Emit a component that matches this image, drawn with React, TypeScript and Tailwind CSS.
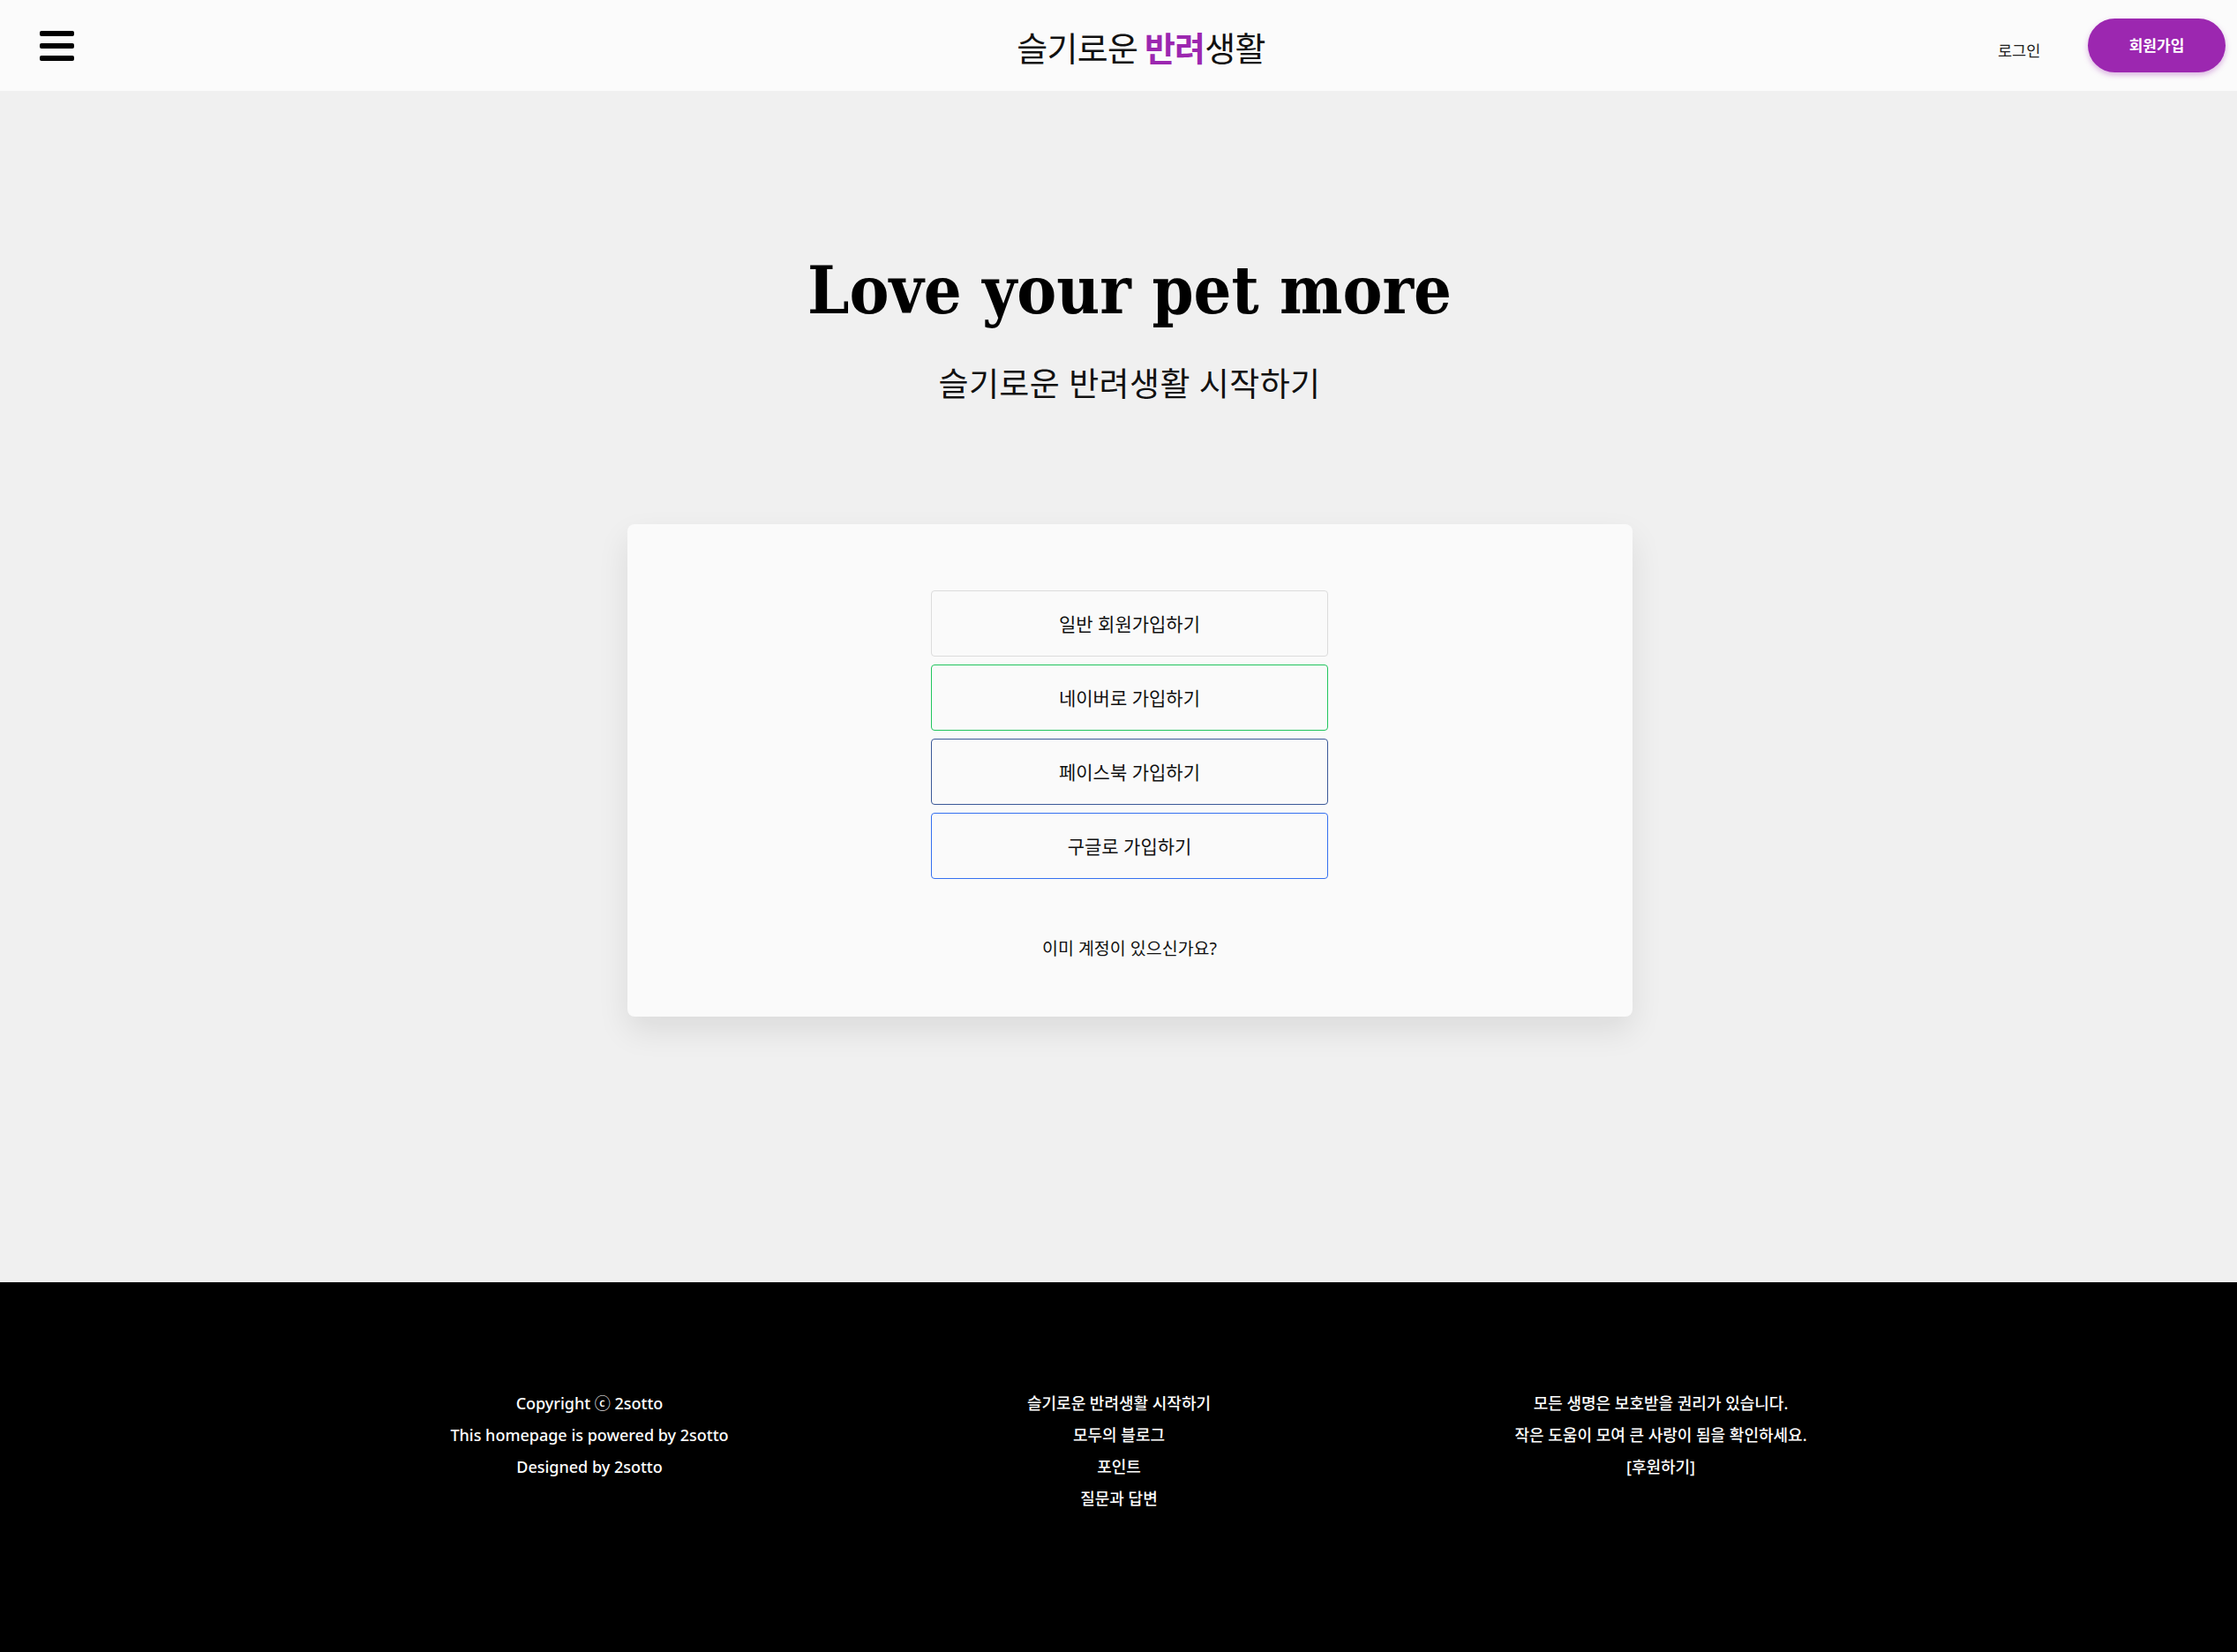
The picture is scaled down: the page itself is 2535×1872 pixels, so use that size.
const sans = "font-['Noto_Sans','Noto_Sans_CJK_KR',sans-serif]";

function Hamburger() {
  return (
    <div className="flex w-[39px] flex-col gap-[8px]">
      <span className="h-[6px] w-full rounded-[2px] bg-black" />
      <span className="h-[6px] w-full rounded-[2px] bg-black" />
      <span className="h-[6px] w-full rounded-[2px] bg-black" />
    </div>
  );
}

function Header() {
  return (
    <header className="flex h-[103px] items-center bg-[#fbfbfb] pl-[45px] pr-[13px]">
      <div className="w-[258px]">
        <Hamburger />
      </div>
      <div className="flex flex-1 justify-center pl-[19px]">
        <span className="mt-[2px] text-[38px] leading-none tracking-[-0.02em] text-[#111] font-['Noto_Sans_CJK_KR',sans-serif]">
          슬기로운 <span className="font-bold text-[#9c27b0]">반려</span>생활
        </span>
      </div>
      <div className="flex w-[258px] items-center justify-between">
        <span className="mt-[12px] text-[17.5px] text-[#222]">로그인</span>
        <button className="h-[61px] w-[156px] rounded-full bg-[#9c27b0] text-[17px] font-bold text-white shadow-[0_3px_6px_rgba(156,39,176,0.35)]">
          회원가입
        </button>
      </div>
    </header>
  );
}

const signups = [
  { label: '일반 회원가입하기', border: 'border-[#dcdcdc]' },
  { label: '네이버로 가입하기', border: 'border-[#22c55e]' },
  { label: '페이스북 가입하기', border: 'border-[#3b5998]' },
  { label: '구글로 가입하기', border: 'border-[#3570f0]' },
];

function SignupCard() {
  return (
    <div className="flex w-[1139px] flex-col items-center rounded-lg bg-[#fafafa] pt-[75px] pb-[64px] shadow-[0_16px_36px_rgba(0,0,0,0.09)]">
      <div className="flex w-[450px] flex-col gap-[9px]">
        {signups.map((s) => (
          <button
            key={s.label}
            className={`h-[75px] w-full rounded-[4px] border-[1.5px] ${s.border} bg-[#fafafa] pt-[3px] text-[21px] text-[#111]`}
          >
            {s.label}
          </button>
        ))}
      </div>
      <p className="mt-[65px] text-[19.5px] leading-[27px] text-[#111]">이미 계정이 있으신가요?</p>
    </div>
  );
}

function Footer() {
  return (
    <footer className="flex h-[420px] justify-center bg-black pt-[119px] pl-[29px] text-[18px] font-medium leading-[36px] text-white">
      <div className="flex w-[600px] flex-col items-center">
        <span>Copyright ⓒ 2sotto</span>
        <span>This homepage is powered by 2sotto</span>
        <span>Designed by 2sotto</span>
      </div>
      <div className="flex w-[600px] flex-col items-center">
        <span>슬기로운 반려생활 시작하기</span>
        <span>모두의 블로그</span>
        <span>포인트</span>
        <span>질문과 답변</span>
      </div>
      <div className="flex w-[628px] flex-col items-center">
        <span>모든 생명은 보호받을 권리가 있습니다.</span>
        <span>작은 도움이 모여 큰 사랑이 됨을 확인하세요.</span>
        <span>[후원하기]</span>
      </div>
    </footer>
  );
}

export default function App() {
  return (
    <div className={`min-h-screen bg-[#f0f0f0] ${sans}`}>
      <Header />
      <main className="flex h-[1350px] flex-col items-center pl-[25px] pt-[189px]">
        <h1 className="text-[75px] font-bold leading-none text-black font-['DejaVu_Serif_Condensed','DejaVu_Serif',serif] font-stretch-condensed">
          Love your pet more
        </h1>
        <p className="mt-[49px] text-[37px] leading-none tracking-[0.01em] text-[#111]">슬기로운 반려생활 시작하기</p>
        <div className="mt-[141px]">
          <SignupCard />
        </div>
      </main>
      <Footer />
    </div>
  );
}
